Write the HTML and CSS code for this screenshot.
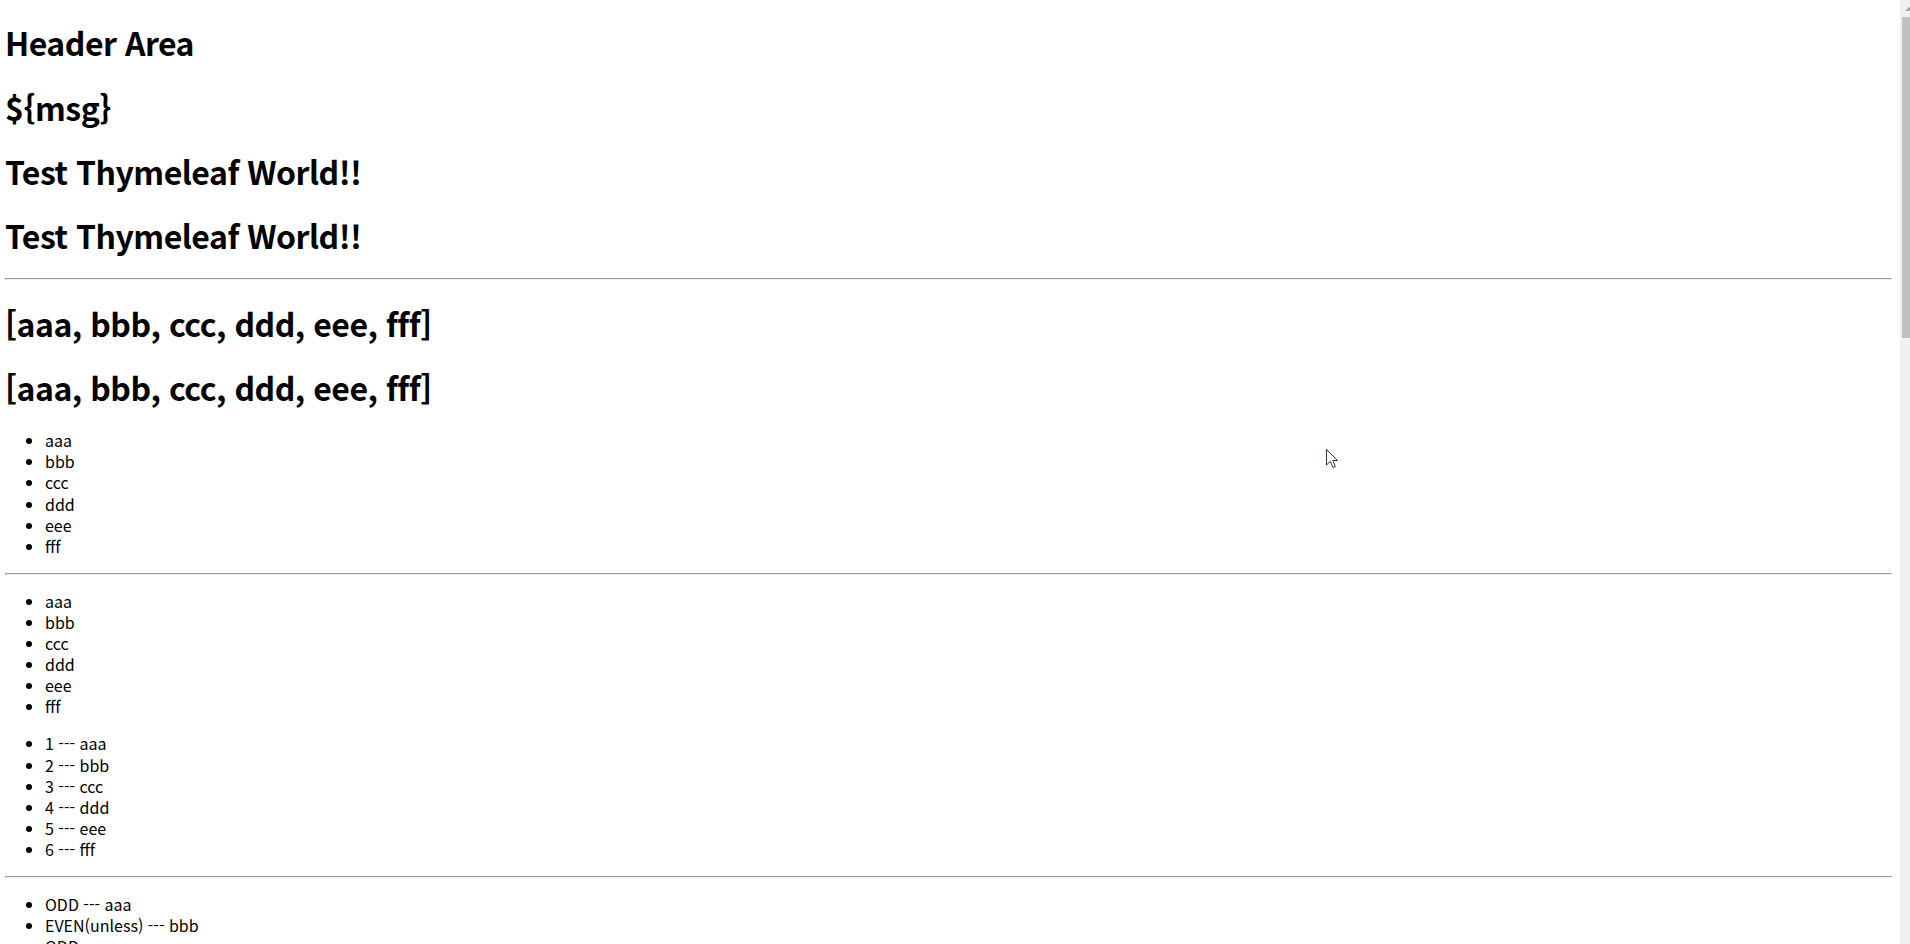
FILE: index.html
```html
<!DOCTYPE html>
<html lang="ko">
<head>
  <meta charset="UTF-8" />
  <meta name="viewport" content="width=device-width, initial-scale=1.0" />
  <title>Thymeleaf Test</title>
  <link rel="stylesheet" href="styles.css">
</head>
<body>
  <div class="page">
    <h1>Header Area</h1>
    <h1>${msg}</h1>
    <h1>Test Thymeleaf World!!</h1>
    <h1>Test Thymeleaf World!!</h1>
    <hr>

    <h1>[aaa, bbb, ccc, ddd, eee, fff]</h1>
    <h1>[aaa, bbb, ccc, ddd, eee, fff]</h1>
    <ul>
      <li>aaa</li>
      <li>bbb</li>
      <li>ccc</li>
      <li>ddd</li>
      <li>eee</li>
      <li>fff</li>
    </ul>
    <hr>

    <ul>
      <li>aaa</li>
      <li>bbb</li>
      <li>ccc</li>
      <li>ddd</li>
      <li>eee</li>
      <li>fff</li>
    </ul>
    <ul>
      <li>1 --- aaa</li>
      <li>2 --- bbb</li>
      <li>3 --- ccc</li>
      <li>4 --- ddd</li>
      <li>5 --- eee</li>
      <li>6 --- fff</li>
    </ul>
    <hr>

    <ul>
      <li>ODD --- aaa</li>
      <li>EVEN(unless) --- bbb</li>
      <li>ODD --- ccc</li>
      <li>EVEN(unless) --- ddd</li>
      <li>ODD --- eee</li>
      <li>EVEN(unless) --- fff</li>
    </ul>
    <ul>
      <li>ODD --- aaa</li>
      <li>EVEN --- bbb</li>
      <li>ODD --- ccc</li>
      <li>EVEN --- ddd</li>
      <li>ODD --- eee</li>
      <li>EVEN --- fff</li>
    </ul>
    <hr>

    <h1>Footer Area</h1>

    <!-- mouse pointer left in the screenshot -->
    <svg class="cursor" width="13" height="20" viewBox="0 0 13 20">
      <path d="M0.5 0.5 L0.5 16 L4.3 12.4 L7 18.6 L9.4 17.6 L6.8 11.5 L11.6 11.5 Z" fill="#fff" stroke="#27354f" stroke-width="1" stroke-linejoin="round"/>
    </svg>
  </div>

  <div class="scrollbar">
    <div class="scrollbar-arrow"></div>
    <div class="scrollbar-thumb"></div>
  </div>
</body>
</html>
```
FILE: styles.css
```css
html {
  overflow: hidden;
}
body {
  margin: 0;
  height: 100vh;
  display: flex;
  overflow: hidden;
  background: #fff;
  color: #000;
  font-family: "Noto Sans CJK KR", "Noto Sans", sans-serif;
  font-size: 16px;
  line-height: 21.1px;
}
.page {
  flex: 1;
  position: relative;
  padding: 0 8px 0 5px;
  overflow: hidden;
}
h1 {
  font-size: 32px;
  font-weight: bold;
  line-height: 42.8px;
  letter-spacing: -0.5px;
  margin: 21.44px 0;
}
hr {
  margin: 8px 0;
}
ul {
  margin: 16px 0;
  padding-left: 40px;
}
.cursor {
  position: absolute;
  left: 1326px;
  top: 449px;
}
.scrollbar {
  width: 10px;
  flex-shrink: 0;
  background: #f0f0f0;
  overflow: hidden;
}
.scrollbar-arrow {
  width: 0;
  height: 0;
  margin: 7px 0 0 5px;
  border-left: 4px solid transparent;
  border-right: 4px solid transparent;
  border-bottom: 4px solid #a3a3a3;
}
.scrollbar-thumb {
  height: 321px;
  margin: 6px 0 0 2px;
  background: #c1c1c1;
}
```
